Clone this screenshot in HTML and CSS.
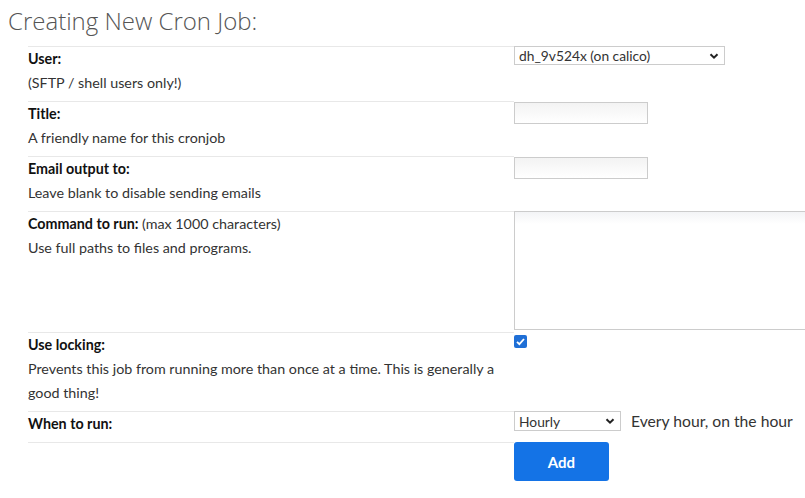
FILE: index.html
```html
<!DOCTYPE html>
<html>
<head>
<meta charset="utf-8">
<link rel="stylesheet" href="styles.css">
</head>
<body>
<h1 class="title">Creating New Cron Job:</h1>
<form class="form">
  <div class="lbl">
    <div class="name">User:</div>
    <div class="desc">(SFTP / shell users only!)</div>
  </div>
  <div class="ctl">
    <div class="select user-select"><span>dh_9v524x (on calico)</span><svg class="chev" viewBox="0 0 10 10"><path d="M1.5 3.2 L5 6.7 L8.5 3.2" fill="none" stroke="#222" stroke-width="2"/></svg></div>
  </div>

  <div class="lbl">
    <div class="name">Title:</div>
    <div class="desc">A friendly name for this cronjob</div>
  </div>
  <div class="ctl"><div class="input"></div></div>

  <div class="lbl">
    <div class="name">Email output to:</div>
    <div class="desc">Leave blank to disable sending emails</div>
  </div>
  <div class="ctl"><div class="input"></div></div>

  <div class="lbl">
    <div class="name">Command to run: <span class="note">(max 1000 characters)</span></div>
    <div class="desc">Use full paths to files and programs.</div>
  </div>
  <div class="ctl"><div class="textarea"></div></div>

  <div class="lbl">
    <div class="name">Use locking:</div>
    <div class="desc">Prevents this job from running more than once at a time. This is generally a good thing!</div>
  </div>
  <div class="ctl"><div class="check"><svg viewBox="0 0 13 13"><path d="M3 6.8 L5.4 9.2 L10 4" fill="none" stroke="#fff" stroke-width="1.8"/></svg></div></div>

  <div class="lbl">
    <div class="name">When to run:</div>
  </div>
  <div class="ctl when">
    <div class="select hour-select"><span>Hourly</span><svg class="chev" viewBox="0 0 10 10"><path d="M1.5 3.2 L5 6.7 L8.5 3.2" fill="none" stroke="#222" stroke-width="2"/></svg></div>
    <span class="when-text">Every hour, on the hour</span>
  </div>

  <div class="lbl last"></div>
  <div class="ctl"><button type="button" class="add">Add</button></div>
</form>
</body>
</html>
```

FILE: styles.css
```css
html { overflow: hidden; }
body {
  margin: 0;
  padding: 0 0 0 8px;
  background: #fff;
  font-family: "Lato", "Liberation Sans", sans-serif;
  color: #333;
}
.title {
  margin: 0;
  padding-top: 4px;
  height: 42px;
  font-family: "Open Sans", "Liberation Sans", sans-serif;
  font-weight: 300;
  font-size: 24px;
  line-height: 34px;
  color: #555;
}
.form {
  display: grid;
  grid-template-columns: 486px auto;
  margin-left: 20px;
}
.lbl {
  border-top: 1px solid #e8e8e8;
  padding-bottom: 6px;
  font-size: 14.3px;
  line-height: 24px;
}
.lbl.last { padding: 0; }
.name { font-weight: bold; color: #111; }
.note { font-weight: normal; color: #333; }
.desc { color: #333; padding-right: 8px; }
.ctl { padding-bottom: 2px; }
.select {
  box-sizing: border-box;
  display: flex;
  align-items: center;
  justify-content: space-between;
  border: 1px solid #ccc;
  background: #fff;
  font-size: 13.8px;
  color: #333;
  padding: 0 5px 0 4px;
}
.user-select { width: 211px; height: 19px; }
.hour-select { width: 107px; height: 20px; }
.chev { width: 10px; height: 10px; }
.input {
  box-sizing: border-box;
  width: 134px;
  height: 22px;
  margin-top: 1px;
  border: 1px solid #ccc;
  background: linear-gradient(#f3f3f3, #fff);
}
.textarea {
  box-sizing: border-box;
  width: 291px;
  height: 119px;
  border: 1px solid #ccc;
  border-right: none;
  background: linear-gradient(#f3f4f6, #fff 12px);
}
.check {
  width: 13px;
  height: 13px;
  margin-top: 3px;
  border-radius: 2px;
  background: #1f6fd6;
}
.check svg { width: 13px; height: 13px; display: block; }
.when { display: flex; align-items: center; gap: 10px; height: 20px; }
.when-text { font-size: 15.7px; color: #333; }
.add {
  width: 95px;
  height: 39px;
  border: none;
  border-radius: 3px;
  background: #1473e6;
  color: #fff;
  font-family: "Lato", "Liberation Sans", sans-serif;
  font-weight: bold;
  font-size: 15px;
  padding: 0;
}
```
